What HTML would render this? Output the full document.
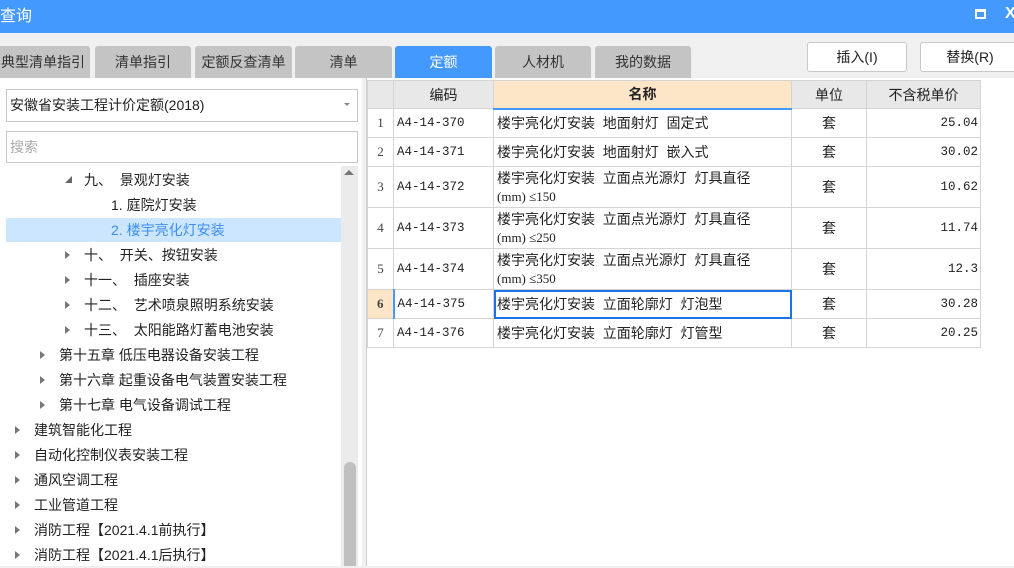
<!DOCTYPE html>
<html><head><meta charset="utf-8"><style>
*{margin:0;padding:0;box-sizing:border-box}
body{width:1014px;height:566px;overflow:hidden;background:#f0f0f0;font-family:"Liberation Sans","Noto Sans CJK SC",sans-serif;font-size:14px;color:#222;position:relative}
.abs{position:absolute}
.title{left:0;top:0;width:1014px;height:33px;background:#4499ff;color:#fff;font-size:16px;line-height:33px;padding-left:0}
.tab{top:46px;height:32px;background:#c4c4c4;border-radius:3px 3px 0 0;text-align:center;line-height:32px;font-size:14px;color:#333}
.btn{top:42px;height:30px;background:#fff;border:1px solid #c8c8c8;border-radius:3px;text-align:center;line-height:28px;font-size:14px}
.left{left:0;top:78px;width:362px;height:488px;background:#fff}
.tree div{position:absolute;height:25px;line-height:25px;font-size:14px;white-space:nowrap}
.tri{position:absolute;width:0;height:0;border-top:4px solid transparent;border-bottom:4px solid transparent;border-left:5px solid #777}
table{border-collapse:collapse;position:absolute;left:367px;top:80px;background:#fff;table-layout:fixed}
td{border:1px solid #d4d4d4;font-size:14px;padding:0 3px;vertical-align:middle;white-space:nowrap}
td.n{text-align:center;background:#fff;font-family:"Liberation Serif",serif;font-size:13px;color:#444}
td.c{font-family:"Liberation Mono",monospace;font-size:12.5px}
td.u{text-align:center}
td.p{text-align:right;font-family:"Liberation Mono",monospace;font-size:12.5px;padding-right:2px}
tr.h td{background:#e8e8e8;text-align:center;height:28px;font-size:14px}
.nm{line-height:18px}
.sm{font-family:"Liberation Serif","Noto Sans CJK SC",serif;font-size:13px}
</style></head><body>
<div class="abs title">查询</div>
<div class="abs" style="left:975px;top:9px;width:11px;height:10px;border:2px solid #fff;border-top-width:3px"></div>
<div class="abs" style="left:1005px;top:5px;color:#fff;font-size:16px;font-weight:bold">X</div>

<div class="abs tab" style="left:-4px;width:94px">典型清单指引</div>
<div class="abs tab" style="left:95px;width:96px">清单指引</div>
<div class="abs tab" style="left:195px;width:97px">定额反查清单</div>
<div class="abs tab" style="left:295px;width:97px">清单</div>
<div class="abs tab" style="left:395px;width:97px;background:#4499ff;color:#fff">定额</div>
<div class="abs tab" style="left:495px;width:96px">人材机</div>
<div class="abs tab" style="left:595px;width:96px">我的数据</div>
<div class="abs btn" style="left:807px;width:100px">插入(I)</div>
<div class="abs btn" style="left:920px;width:100px">替换(R)</div>

<div class="abs left"></div>
<div class="abs" style="left:6px;top:89px;width:352px;height:33px;background:#fff;border:1px solid #c8c8c8;line-height:31px;padding-left:3px;font-size:14px">安徽省安装工程计价定额(2018)</div>
<div class="abs" style="left:344px;top:103px;border-left:3px solid transparent;border-right:3px solid transparent;border-top:3px solid #888"></div>
<div class="abs" style="left:6px;top:131px;width:352px;height:32px;background:#fff;border:1px solid #c8c8c8;line-height:30px;padding-left:3px;color:#aaa">搜索</div>

<div class="abs" style="left:6px;top:218px;width:335px;height:24px;background:#cce6ff"></div>
<div class="abs" style="left:341px;top:166px;width:17px;height:400px;background:#ebebeb"></div>
<div class="abs" style="left:344px;top:170px;border-left:5px solid transparent;border-right:5px solid transparent;border-bottom:5px solid #777"></div>
<div class="abs" style="left:344px;top:462px;width:12px;height:104px;background:#c0c0c0;border-radius:6px 6px 0 0"></div>

<div class="tree">
<div class="abs" style="left:65px;top:176px;width:0;height:0;border-left:7px solid transparent;border-bottom:7px solid #666"></div>
<div style="left:84px;top:168px">九、&nbsp;&nbsp;景观灯安装</div>
<div style="left:111px;top:193px">1. 庭院灯安装</div>
<div style="left:111px;top:218px;color:#3d8ef0">2. 楼宇亮化灯安装</div>
<span class="tri" style="left:65px;top:251px"></span><div style="left:84px;top:243px">十、&nbsp;&nbsp;开关、按钮安装</div>
<span class="tri" style="left:65px;top:276px"></span><div style="left:84px;top:268px">十一、&nbsp;&nbsp;插座安装</div>
<span class="tri" style="left:65px;top:301px"></span><div style="left:84px;top:293px">十二、&nbsp;&nbsp;艺术喷泉照明系统安装</div>
<span class="tri" style="left:65px;top:326px"></span><div style="left:84px;top:318px">十三、&nbsp;&nbsp;太阳能路灯蓄电池安装</div>
<span class="tri" style="left:40px;top:351px"></span><div style="left:59px;top:343px">第十五章 低压电器设备安装工程</div>
<span class="tri" style="left:40px;top:376px"></span><div style="left:59px;top:368px">第十六章 起重设备电气装置安装工程</div>
<span class="tri" style="left:40px;top:401px"></span><div style="left:59px;top:393px">第十七章 电气设备调试工程</div>
<span class="tri" style="left:15px;top:426px"></span><div style="left:34px;top:418px">建筑智能化工程</div>
<span class="tri" style="left:15px;top:451px"></span><div style="left:34px;top:443px">自动化控制仪表安装工程</div>
<span class="tri" style="left:15px;top:476px"></span><div style="left:34px;top:468px">通风空调工程</div>
<span class="tri" style="left:15px;top:501px"></span><div style="left:34px;top:493px">工业管道工程</div>
<span class="tri" style="left:15px;top:526px"></span><div style="left:34px;top:518px">消防工程【2021.4.1前执行】</div>
<span class="tri" style="left:15px;top:551px"></span><div style="left:34px;top:543px">消防工程【2021.4.1后执行】</div>
</div>

<div class="abs" style="left:366px;top:78px;width:648px;height:488px;background:#fff;border-left:1px solid #d0d0d0"></div>
<table>
<colgroup><col style="width:26px"><col style="width:100px"><col style="width:298px"><col style="width:75px"><col style="width:114px"></colgroup>
<tr class="h"><td></td><td>编码</td><td style="background:#fde6c8;font-weight:bold;border-bottom:2px solid #4499ff">名称</td><td>单位</td><td>不含税单价</td></tr>
<tr style="height:29px"><td class="n">1</td><td class="c">A4-14-370</td><td>楼宇亮化灯安装&nbsp; 地面射灯&nbsp; 固定式</td><td class="u">套</td><td class="p">25.04</td></tr>
<tr style="height:29px"><td class="n">2</td><td class="c">A4-14-371</td><td>楼宇亮化灯安装&nbsp; 地面射灯&nbsp; 嵌入式</td><td class="u">套</td><td class="p">30.02</td></tr>
<tr style="height:41px"><td class="n">3</td><td class="c">A4-14-372</td><td class="nm">楼宇亮化灯安装&nbsp; 立面点光源灯&nbsp; 灯具直径<br><span class="sm">(mm) ≤150</span></td><td class="u">套</td><td class="p">10.62</td></tr>
<tr style="height:41px"><td class="n">4</td><td class="c">A4-14-373</td><td class="nm">楼宇亮化灯安装&nbsp; 立面点光源灯&nbsp; 灯具直径<br><span class="sm">(mm) ≤250</span></td><td class="u">套</td><td class="p">11.74</td></tr>
<tr style="height:41px"><td class="n">5</td><td class="c">A4-14-374</td><td class="nm">楼宇亮化灯安装&nbsp; 立面点光源灯&nbsp; 灯具直径<br><span class="sm">(mm) ≤350</span></td><td class="u">套</td><td class="p">12.3</td></tr>
<tr style="height:29px"><td class="n" style="background:#fde6c8;font-weight:bold;border-right:2px solid #4499ff">6</td><td class="c">A4-14-375</td><td style="outline:2px solid #1a73e8;outline-offset:-2px">楼宇亮化灯安装&nbsp; 立面轮廓灯&nbsp; 灯泡型</td><td class="u">套</td><td class="p">30.28</td></tr>
<tr style="height:29px"><td class="n">7</td><td class="c">A4-14-376</td><td>楼宇亮化灯安装&nbsp; 立面轮廓灯&nbsp; 灯管型</td><td class="u">套</td><td class="p">20.25</td></tr>
</table>
</body></html>
